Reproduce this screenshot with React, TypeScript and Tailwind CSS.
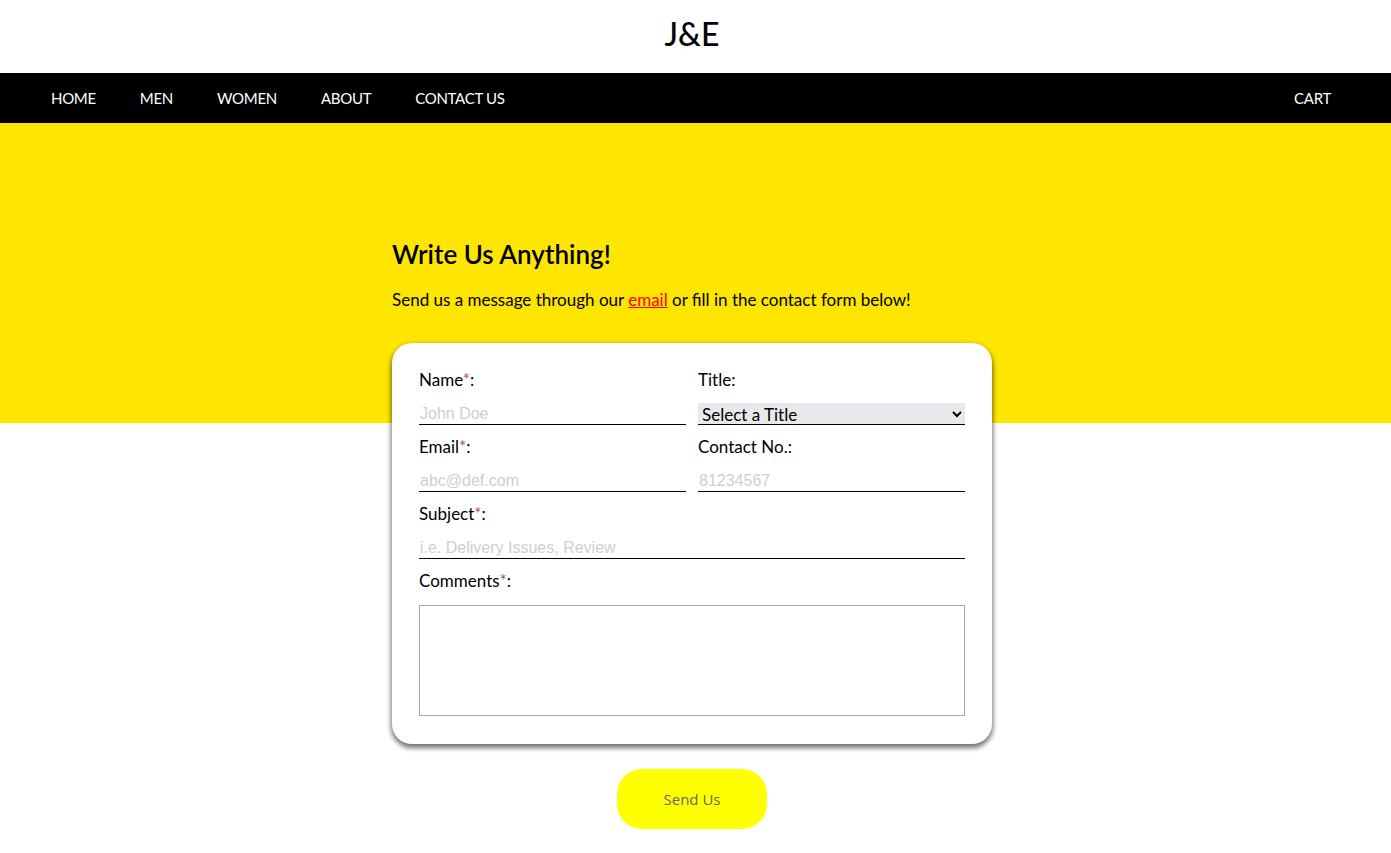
function Field({ label, required, placeholder }: { label: string; required?: boolean; placeholder: string }) {
  return (
    <div className="flex flex-col">
      <label className="leading-6 text-[17px] text-black">
        {label}
        {required && <span className="text-[#9a5a4a]">*</span>}:
      </label>
      <input
        type="text"
        placeholder={placeholder}
        className="mt-2 h-[25px] border-b border-black px-[1px] pt-[4px] font-['Liberation_Sans',Arial,sans-serif] text-base outline-none placeholder:text-[#cfcfcf]"
      />
    </div>
  );
}

export default function App() {
  const links = ["HOME", "MEN", "WOMEN", "ABOUT", "CONTACT US"];
  return (
    <div className="min-h-screen bg-white font-['Lato',sans-serif] text-black">
      <header className="flex h-[73px] items-center justify-center pb-[6px] pr-[7px]">
        <h1 className="text-[32px] font-medium leading-none">J&amp;E</h1>
      </header>

      <nav className="flex h-[50px] items-center justify-between bg-black pl-[29px] pr-[38px] text-[15px] tracking-[-0.3px] text-white">
        <div className="flex">
          {links.map((l) => (
            <a key={l} href="#" className="px-[22px]">
              {l}
            </a>
          ))}
        </div>
        <a href="#" className="px-[22px]">
          CART
        </a>
      </nav>

      <main className="bg-[linear-gradient(#ffe600_300px,#ffffff_300px)] pb-[24px] pr-[7px]">
        <div className="mx-auto w-[600px] pt-[115px]">
          <h2 className="text-[26px] font-semibold leading-8">Write Us Anything!</h2>
          <p className="mt-[18px] text-[17px] leading-6">
            Send us a message through our{" "}
            <a href="#" className="text-[#ff0000] underline">
              email
            </a>{" "}
            or fill in the contact form below!
          </p>

          <form className="mt-[31px] rounded-[20px] bg-white px-[27px] pb-[28px] pt-[25px] shadow-[0_3px_5px_1px_rgba(0,0,0,0.55)]">
            <div className="grid grid-cols-2 gap-x-3 gap-y-[10px]">
              <Field label="Name" required placeholder="John Doe" />
              <div className="flex flex-col">
                <label className="leading-6 text-[17px]">Title:</label>
                <select className="mt-[11px] h-[22px] border-b border-black bg-[#e9e9ed] text-[17px] text-black outline-none">
                  <option>Select a Title</option>
                  <option>Mr.</option>
                  <option>Ms.</option>
                  <option>Mrs.</option>
                  <option>Dr.</option>
                </select>
              </div>
              <Field label="Email" required placeholder="abc@def.com" />
              <div className="flex flex-col">
                <label className="leading-6 text-[17px]">Contact No.:</label>
                <input
                  type="text"
                  placeholder="81234567"
                  className="mt-2 h-[25px] border-b border-black px-[1px] pt-[4px] font-['Liberation_Sans',Arial,sans-serif] text-base outline-none placeholder:text-[#cfcfcf]"
                />
              </div>
              <div className="col-span-2">
                <Field label="Subject" required placeholder="i.e. Delivery Issues, Review" />
              </div>
              <div className="col-span-2 flex flex-col">
                <label className="leading-6 text-[17px]">
                  Comments<span className="text-[#9a5a4a]">*</span>:
                </label>
                <textarea className="mt-3 h-[111px] resize-none border border-[#aaaaaa] outline-none" />
              </div>
            </div>
          </form>

          <div className="mt-[25px] flex justify-center">
            <button className="h-[60px] w-[150px] rounded-[25px] bg-[#ffff00] font-['Open_Sans',sans-serif] text-[15px] text-[#666666]">
              Send Us
            </button>
          </div>
        </div>
      </main>
    </div>
  );
}
